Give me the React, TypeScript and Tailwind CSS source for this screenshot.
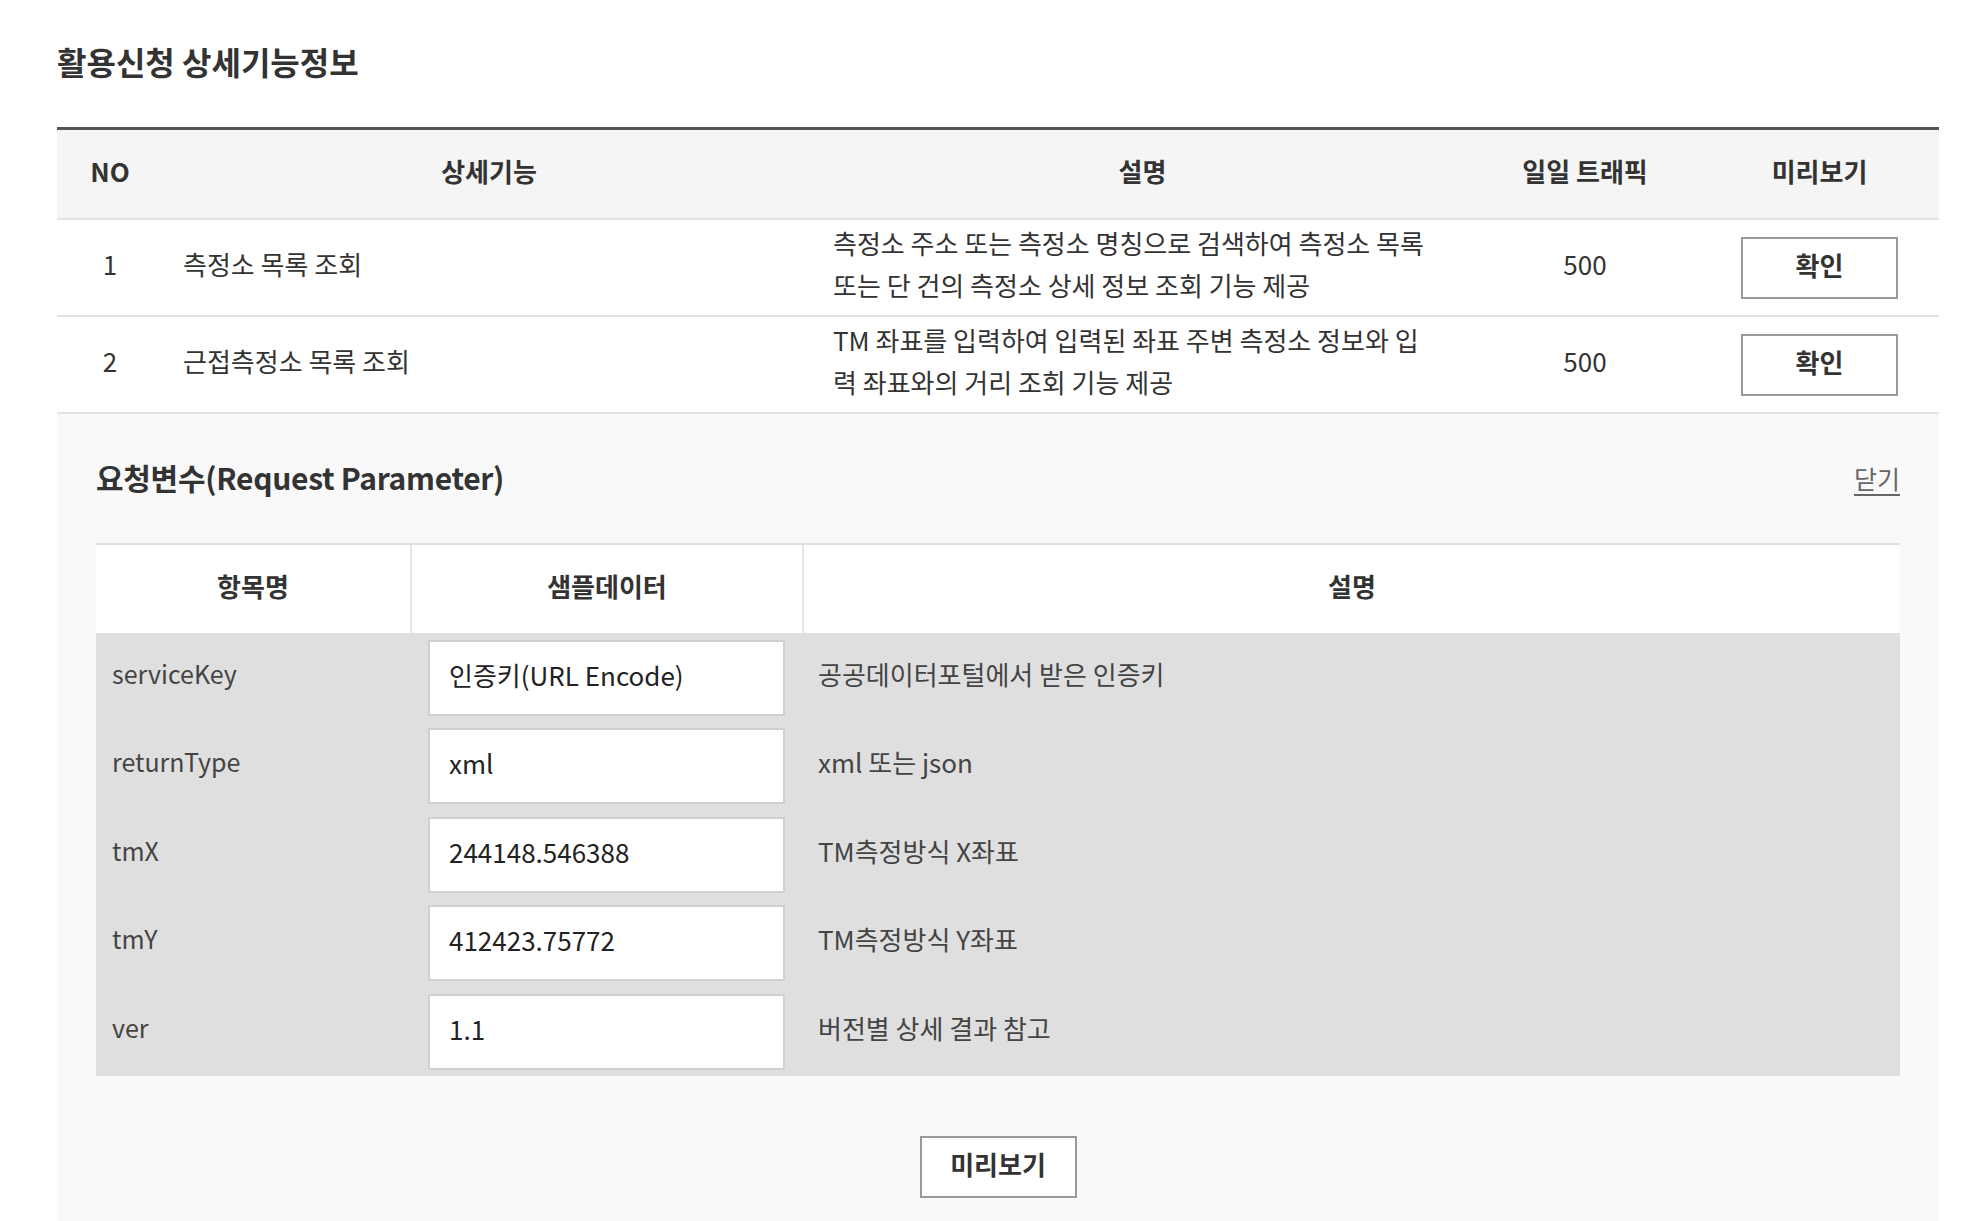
import React from "react";

const rows = [
  {
    no: "1",
    name: "측정소 목록 조회",
    desc: ["측정소 주소 또는 측정소 명칭으로 검색하여 측정소 목록", "또는 단 건의 측정소 상세 정보 조회 기능 제공"],
    traffic: "500",
  },
  {
    no: "2",
    name: "근접측정소 목록 조회",
    desc: ["TM 좌표를 입력하여 입력된 좌표 주변 측정소 정보와 입", "력 좌표와의 거리 조회 기능 제공"],
    traffic: "500",
  },
];

const params = [
  { key: "serviceKey", sample: "인증키(URL Encode)", desc: "공공데이터포털에서 받은 인증키" },
  { key: "returnType", sample: "xml", desc: "xml 또는 json" },
  { key: "tmX", sample: "244148.546388", desc: "TM측정방식 X좌표" },
  { key: "tmY", sample: "412423.75772", desc: "TM측정방식 Y좌표" },
  { key: "ver", sample: "1.1", desc: "버전별 상세 결과 참고" },
];

export default function App() {
  return (
    <div className="min-h-[1221px] bg-white font-['Noto_Sans_CJK_KR','Noto_Sans',sans-serif] text-[#333]">
      <div className="ml-[57px] w-[1882px] pt-[41px]">
        <h2 className="text-[32px] leading-[40px] font-bold text-[#333]">
          활용신청 상세기능정보
        </h2>

        <div className="mt-[46px] border-t-[3px] border-[#555]">
          <div className="grid grid-cols-[106px_652px_655px_230px_239px] h-[90px] items-center bg-[#f5f5f5] border-b-2 border-[#e2e2e2] text-[26px] font-bold text-center">
            <div className="pb-[8px]">NO</div>
            <div className="pb-[8px]">상세기능</div>
            <div className="pb-[8px]">설명</div>
            <div className="pb-[8px]">일일 트래픽</div>
            <div className="pb-[8px]">미리보기</div>
          </div>
          {rows.map((r) => (
            <div
              key={r.no}
              className="grid grid-cols-[106px_652px_655px_230px_239px] h-[97px] items-center border-b-2 border-[#e2e2e2] text-[26px]"
            >
              <div className="text-center pb-[8px]">{r.no}</div>
              <div className="pl-[20px] pb-[8px]">{r.name}</div>
              <div className="pl-[18px] leading-[42px] pb-[8px] whitespace-nowrap">
                {r.desc.map((l) => (
                  <div key={l}>{l}</div>
                ))}
              </div>
              <div className="text-center pb-[8px]">{r.traffic}</div>
              <div className="flex justify-center">
                <button className="w-[157px] h-[62px] border-2 border-[#9a9a9a] bg-white text-[26px] font-bold text-[#333] pb-[6px]">
                  확인
                </button>
              </div>
            </div>
          ))}
        </div>

        <div className="bg-[#f9f9f9] px-[39px] pt-[45px] pb-[30px]">
          <div className="flex items-center justify-between h-[36px]">
            <h3 className="text-[30px] font-bold tracking-[-0.3px] text-[#333]">요청변수(Request Parameter)</h3>
            <a className="text-[25px] text-[#666] underline underline-offset-[5px] mt-[4px]">닫기</a>
          </div>

          <div className="mt-[48px] border-t-2 border-[#e0e0e0]">
            <div className="grid grid-cols-[314px_392px_1fr] h-[88px] bg-white text-[26px] font-bold text-center">
              <div className="flex items-center justify-center pb-[8px]">항목명</div>
              <div className="flex items-center justify-center border-l-2 border-[#e6e6e6] pb-[8px]">샘플데이터</div>
              <div className="flex items-center justify-center border-l-2 border-[#e6e6e6] pb-[8px]">설명</div>
            </div>
            <div className="bg-[#dfdfdf]">
              {params.map((p) => (
                <div key={p.key} className="grid grid-cols-[314px_392px_1fr] h-[88.5px] items-center text-[26px] text-[#444]">
                  <div className="pl-[16px] pb-[8px] text-[25px]">{p.key}</div>
                  <div className="pl-[18px] pr-[17px] pt-[1px]">
                    <input
                      readOnly
                      value={p.sample}
                      className="w-full h-[76px] bg-white border-2 border-[#d0d0d0] px-[19px] pb-[7px] text-[26px] text-[#222] outline-none font-['Noto_Sans_CJK_KR','Noto_Sans',sans-serif]"
                    />
                  </div>
                  <div className="pl-[16px] pb-[8px]">{p.desc}</div>
                </div>
              ))}
            </div>
          </div>

          <div className="mt-[60px] flex justify-center">
            <button className="w-[157px] h-[62px] border-2 border-[#9a9a9a] bg-white text-[26px] font-bold text-[#333] pb-[6px]">
              미리보기
            </button>
          </div>
        </div>
      </div>
    </div>
  );
}
